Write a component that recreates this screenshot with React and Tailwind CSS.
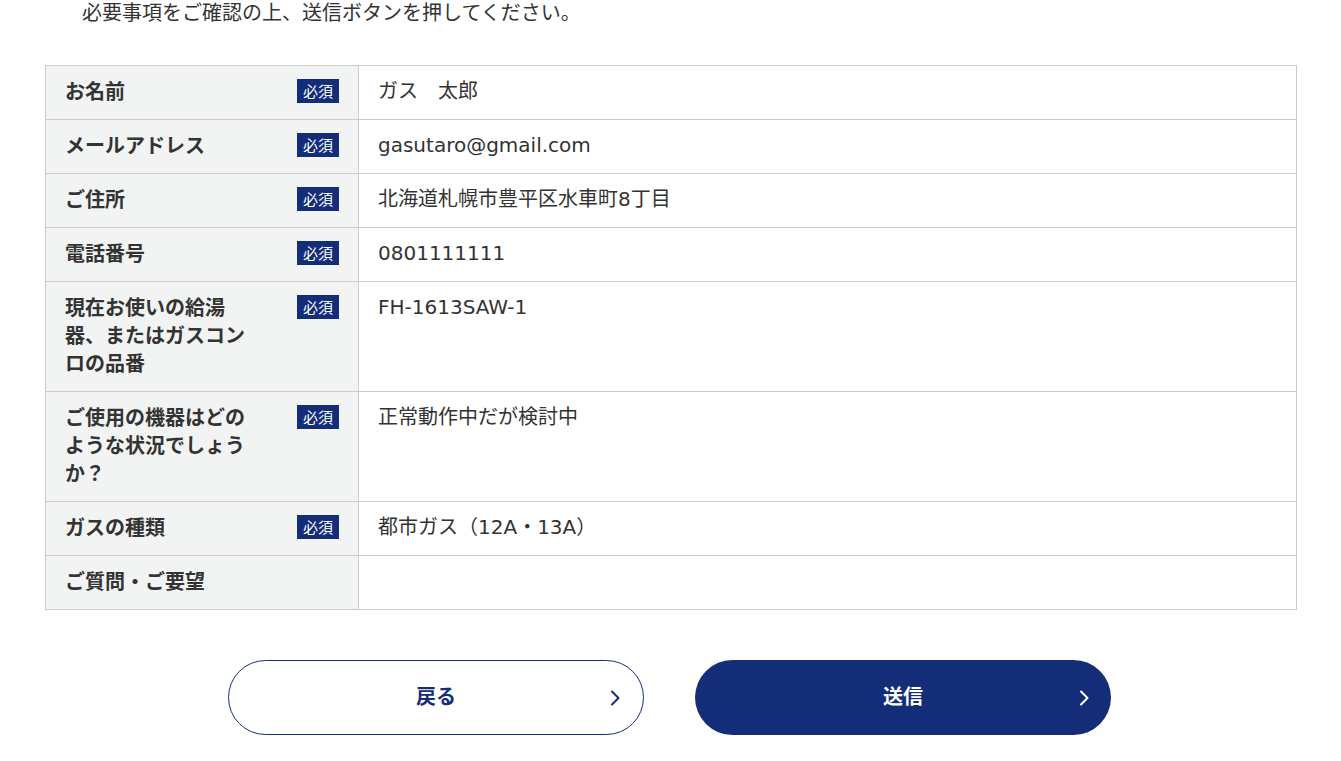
import React from "react";

const rows = [
  { label: "お名前", req: true, value: "ガス　太郎" },
  { label: "メールアドレス", req: true, value: "gasutaro@gmail.com" },
  { label: "ご住所", req: true, value: "北海道札幌市豊平区水車町8丁目" },
  { label: "電話番号", req: true, value: "0801111111" },
  { label: "現在お使いの給湯器、またはガスコンロの品番", req: true, value: "FH-1613SAW-1" },
  { label: "ご使用の機器はどのような状況でしょうか？", req: true, value: "正常動作中だが検討中" },
  { label: "ガスの種類", req: true, value: "都市ガス（12A・13A）" },
  { label: "ご質問・ご要望", req: false, value: "" },
];

function Chevron({ color }) {
  return (
    <svg width="10" height="16" viewBox="0 0 10 16" fill="none">
      <polyline points="2,1.5 8.5,8 2,14.5" stroke={color} strokeWidth="2" strokeLinecap="round" strokeLinejoin="round" />
    </svg>
  );
}

export default function App() {
  return (
    <div
      className="w-[1341px] min-h-[761px] bg-white text-[#333333]"
      style={{ fontFamily: '"DejaVu Sans", "Noto Sans CJK JP", sans-serif' }}
    >
      <div className="pl-[82px] text-[20px] leading-[24px] text-[#333333]" style={{ fontFamily: '"Noto Sans CJK JP", sans-serif' }}>
        必要事項をご確認の上、送信ボタンを押してください。
      </div>

      <div className="mt-[41px] ml-[45px] w-[1252px] border border-[#cccccc]">
        {rows.map((r, i) => (
          <div key={i} className={`flex ${i > 0 ? "border-t border-[#cccccc]" : ""}`}>
            <div className="w-[313px] shrink-0 bg-[#f2f4f4] border-r border-[#cccccc] pl-[19px] pr-[19px] pt-[11px] pb-[14px] flex justify-between items-start">
              <div
                className="w-[190px] text-[20px] leading-[28px] font-bold text-[#333333]"
                style={{ fontFamily: '"Noto Sans CJK JP", sans-serif' }}
              >
                {r.label}
              </div>
              {r.req && (
                <div
                  className="mt-[2px] w-[42px] h-[24px] bg-[#142d78] text-white text-[15px] leading-[23px] text-center"
                  style={{ fontFamily: '"Noto Sans CJK JP", sans-serif' }}
                >
                  必須
                </div>
              )}
            </div>
            <div className="flex-1 pl-[19px] pr-[19px] pt-[11px] pb-[14px] text-[20px] leading-[28px] text-[#333333]">
              {r.value}
            </div>
          </div>
        ))}
      </div>

      <div className="mt-[50px] flex gap-[51px] pl-[228px]">
        <button
          className="relative w-[416px] h-[75px] rounded-full border border-[#142d78] bg-white flex items-center justify-center"
        >
          <span
            className="text-[20px] leading-[28px] font-bold text-[#142d78] mb-[3px]"
            style={{ fontFamily: '"Noto Sans CJK JP", sans-serif' }}
          >
            戻る
          </span>
          <span className="absolute right-[23px] top-1/2 -translate-y-1/2 flex">
            <Chevron color="#142d78" />
          </span>
        </button>
        <button
          className="relative w-[416px] h-[75px] rounded-full bg-[#142d78] flex items-center justify-center"
        >
          <span
            className="text-[20px] leading-[28px] font-bold text-white mb-[3px]"
            style={{ fontFamily: '"Noto Sans CJK JP", sans-serif' }}
          >
            送信
          </span>
          <span className="absolute right-[22px] top-1/2 -translate-y-1/2 flex">
            <Chevron color="#ffffff" />
          </span>
        </button>
      </div>
    </div>
  );
}
